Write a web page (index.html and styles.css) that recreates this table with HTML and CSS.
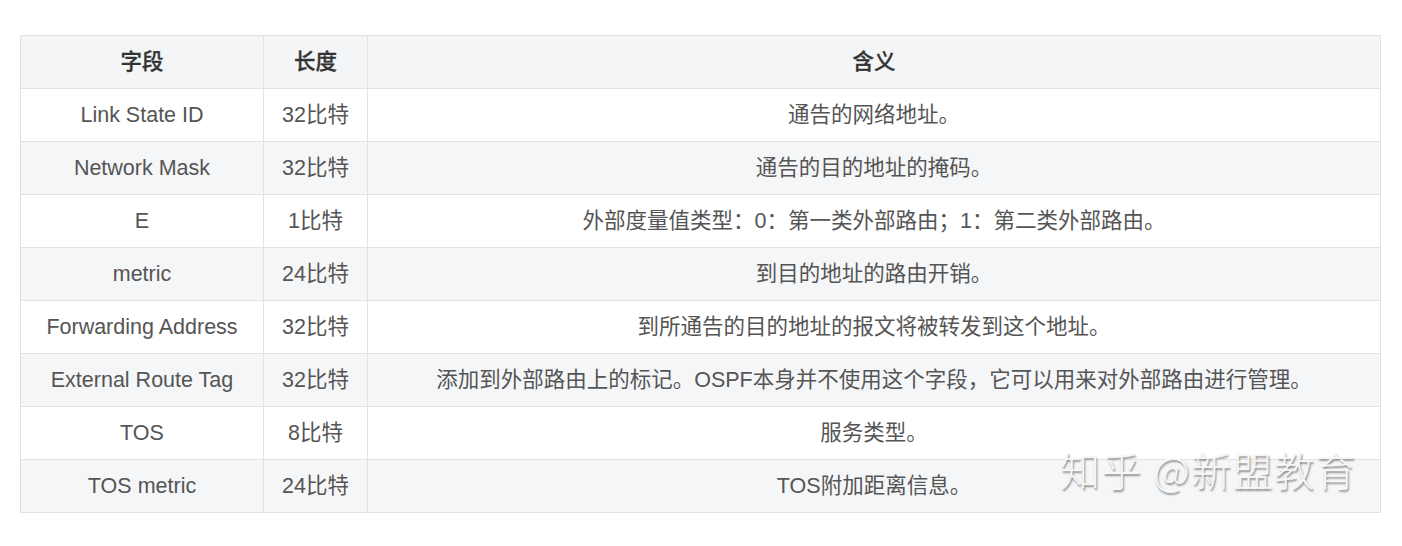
FILE: index.html
```html
<!DOCTYPE html>
<html lang="zh">
<head>
<meta charset="utf-8">
<link rel="stylesheet" href="styles.css">
</head>
<body>
<div class="page">
  <table class="spec">
    <colgroup>
      <col class="c1"><col class="c2"><col class="c3">
    </colgroup>
    <thead>
      <tr><th>字段</th><th>长度</th><th>含义</th></tr>
    </thead>
    <tbody>
      <tr><td>Link State ID</td><td>32比特</td><td>通告的网络地址。</td></tr>
      <tr><td>Network Mask</td><td>32比特</td><td>通告的目的地址的掩码。</td></tr>
      <tr><td>E</td><td>1比特</td><td>外部度量值类型：0：第一类外部路由；1：第二类外部路由。</td></tr>
      <tr><td>metric</td><td>24比特</td><td>到目的地址的路由开销。</td></tr>
      <tr><td>Forwarding Address</td><td>32比特</td><td>到所通告的目的地址的报文将被转发到这个地址。</td></tr>
      <tr><td>External Route Tag</td><td>32比特</td><td>添加到外部路由上的标记。OSPF本身并不使用这个字段，它可以用来对外部路由进行管理。</td></tr>
      <tr><td>TOS</td><td>8比特</td><td>服务类型。</td></tr>
      <tr><td>TOS metric</td><td>24比特</td><td>TOS附加距离信息。</td></tr>
    </tbody>
  </table>
  <div class="watermark">知乎 @新盟教育</div>
</div>
</body>
</html>
```

FILE: styles.css
```css
html, body {
  margin: 0;
  padding: 0;
  background: #ffffff;
}
.page {
  position: relative;
  padding: 35px 22px 0 20px;
  font-family: "Liberation Sans", Arial, "Noto Sans CJK SC", sans-serif;
}
.spec {
  width: 1361px;
  border-collapse: collapse;
  table-layout: fixed;
  border: 1px solid #dcdcdc;
}
.c1 { width: 243px; }
.c2 { width: 104px; }
.spec th, .spec td {
  height: 53px;
  padding: 0 8px;
  border: 1px solid #e2e2e2;
  text-align: center;
  vertical-align: middle;
  font-size: 21.5px;
  line-height: 24px;
  color: #555555;
  white-space: nowrap;
  box-sizing: border-box;
}
.spec th {
  color: #333333;
  font-weight: 500;
  -webkit-text-stroke: 0.3px #333333;
  background: #f4f5f7;
}
.spec tbody tr:nth-child(even) td {
  background: #f5f6f8;
}
.watermark {
  position: absolute;
  left: 1060px;
  top: 440px;
  font-family: "Noto Sans CJK SC", sans-serif;
  font-size: 40px;
  font-weight: 300;
  color: #f7f7f7;
  letter-spacing: 1.5px;
  text-shadow: 1px 2px 2px #8a8a8a;
  white-space: nowrap;
}
```
